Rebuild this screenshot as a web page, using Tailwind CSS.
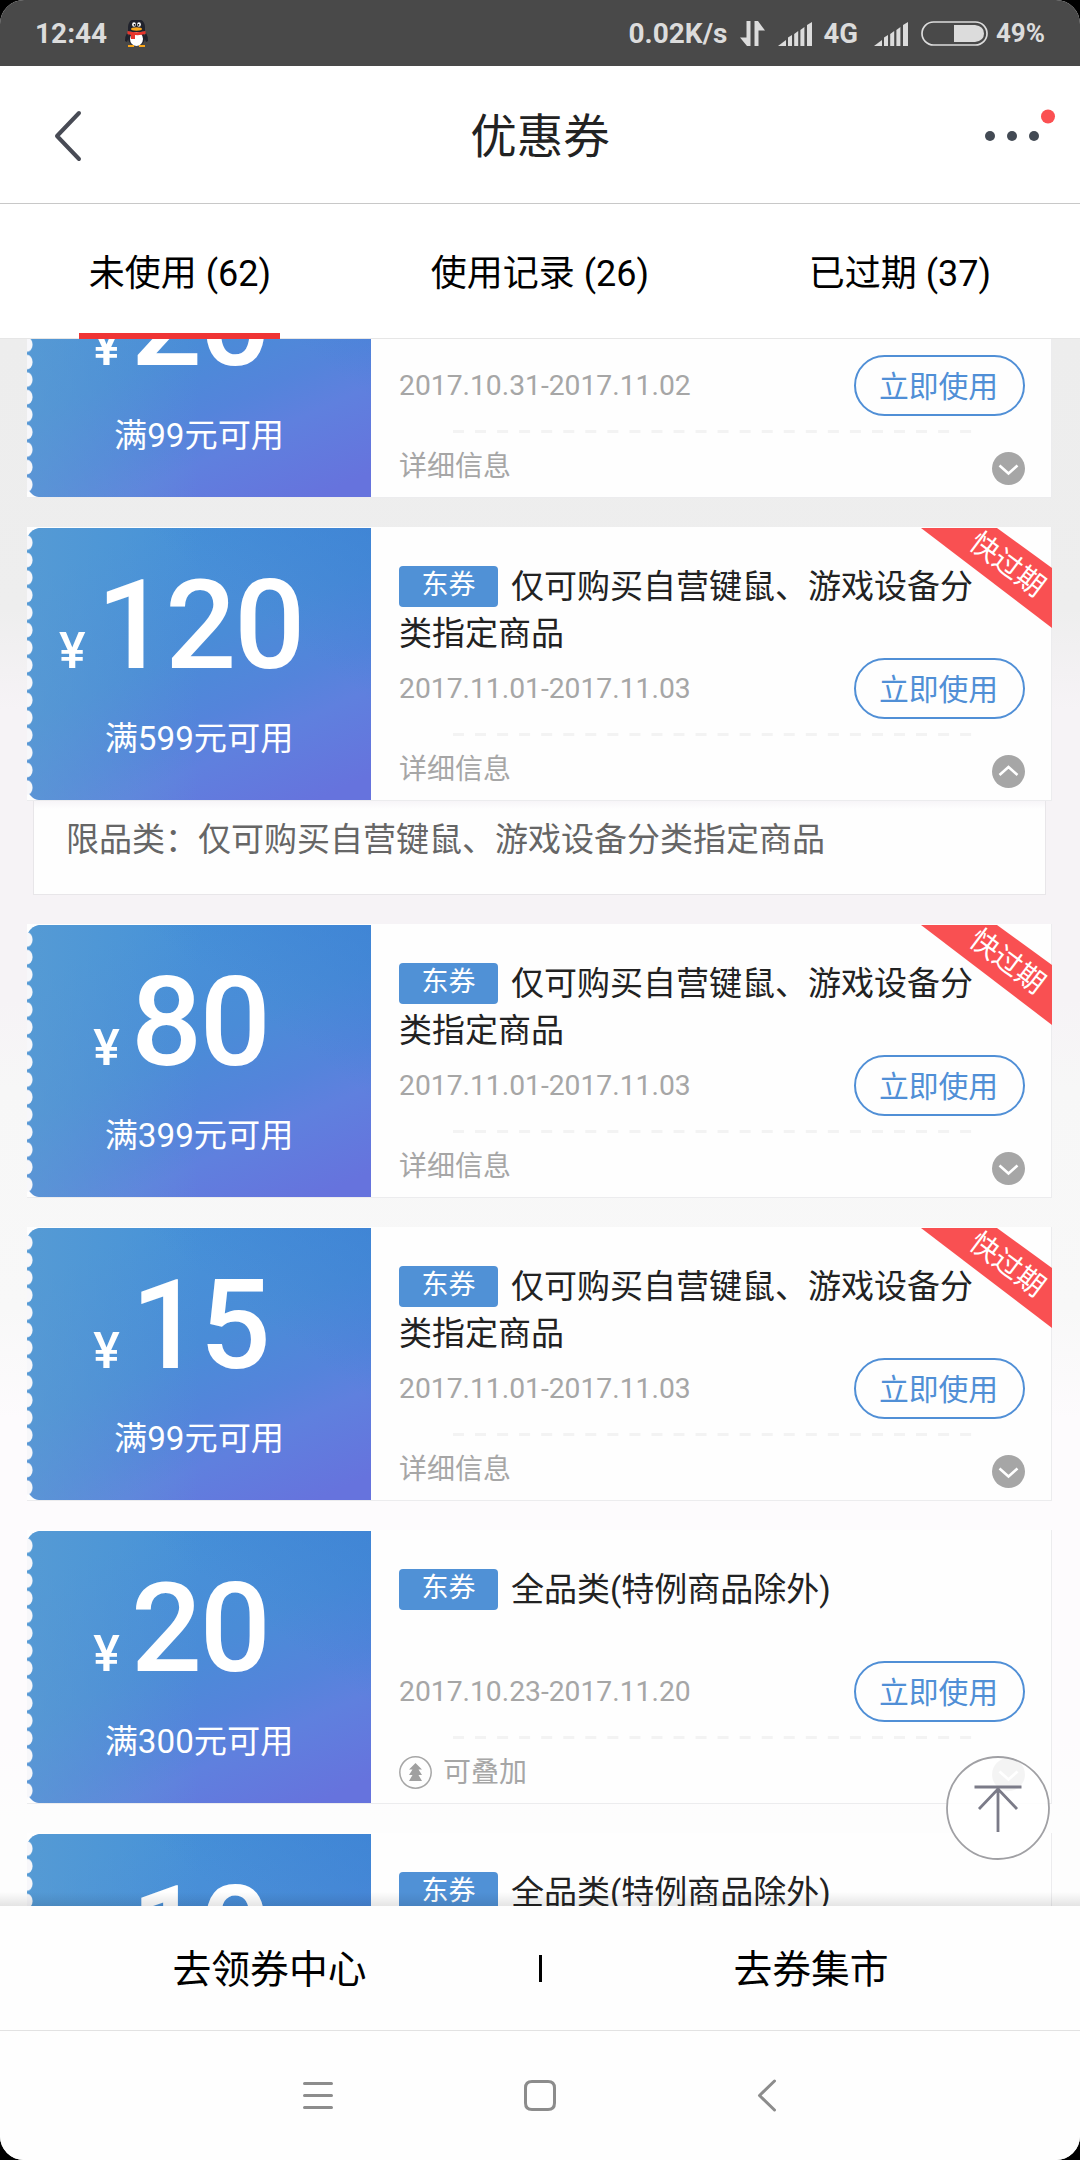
<!DOCTYPE html>
<html lang="zh-CN">
<head>
<meta charset="utf-8">
<title>优惠券</title>
<script src="https://cdn.jsdelivr.net/npm/@tailwindcss/browser@4"></script>
</head>
<body class="bg-black">
<svg class="absolute w-0 h-0">
  <symbol id="signal" viewBox="0 0 34 24"><g fill="#dcdcdc"><path d="M0 24 8 18V24Z"/><path d="M10 15.500 14 13V24H10ZM16.200 12 20.200 9V24H16.200ZM22.400 8 26.400 5V24H22.400ZM29 3 34 0V24H29Z"/></g></symbol>
  <symbol id="down" viewBox="0 0 33 33"><circle cx="16.500" cy="16.500" r="16.500" fill="#a6a6a6"/><path d="M7.500 13.500 16.500 21.500 25.500 13.500" fill="none" stroke="#fff" stroke-width="2.600"/></symbol>
  <symbol id="up" viewBox="0 0 33 33"><circle cx="16.500" cy="16.500" r="16.500" fill="#a6a6a6"/><path d="M7.500 20 16.500 12 25.500 20" fill="none" stroke="#fff" stroke-width="2.600"/></symbol>
  <defs>
    <linearGradient id="tg" gradientUnits="userSpaceOnUse" x1="120" y1="0" x2="250" y2="290"><stop offset="0" stop-color="#4692d8"/><stop offset=".4" stop-color="#4a8cd7"/><stop offset=".62" stop-color="#5484db"/><stop offset=".75" stop-color="#5f80de"/><stop offset="1" stop-color="#6673dd"/></linearGradient>
    <linearGradient id="tl" x1="0" x2="1" y1="0" y2="0"><stop offset="0" stop-color="#5fa0d2" stop-opacity=".6"/><stop offset=".5" stop-color="#5fa0d2" stop-opacity="0"/></linearGradient>
    <linearGradient id="tr" gradientUnits="userSpaceOnUse" x1="344" y1="0" x2="260" y2="110"><stop offset="0" stop-color="#3a80d4" stop-opacity=".6"/><stop offset="1" stop-color="#3a80d4" stop-opacity="0"/></linearGradient>
    <pattern id="teeth" patternUnits="userSpaceOnUse" x="0" y="5.800" width="8" height="17.500"><ellipse cx="0" cy="8.750" rx="5.600" ry="7.200" fill="#f7f7fa"/></pattern>
  </defs>
  <symbol id="ticket" viewBox="0 0 344 272">
    <path d="M12 0H344V272H12Q5 271 1 264L0 262V10L1 8Q5 1 12 0Z" fill="url(#tg)"/>
    <path d="M12 0H344V272H12Q5 271 1 264L0 262V10L1 8Q5 1 12 0Z" fill="url(#tl)"/>
    <path d="M12 0H344V272H12Q5 271 1 264L0 262V10L1 8Q5 1 12 0Z" fill="url(#tr)"/>
    <rect x="0" y="6" width="8" height="262" fill="url(#teeth)"/>
  </symbol>
</svg>
<div class="w-[1080px] h-[2160px] rounded-[24px] overflow-hidden bg-white flex flex-col font-[Roboto,'Noto_Sans_CJK_SC',sans-serif] relative">
  <header class="h-[66px] shrink-0 bg-[#494949] flex items-center text-[#dcdcdc] text-[28px] font-bold pl-[35px] pr-[35px] pt-[2px]">
    <span class="w-[90px]">12:44</span>
    <svg class="w-[23px] h-[28px]" viewBox="0 1 23 28"><path d="M2 14Q0 17 0 22L2 23 4 18M21 14Q23 17 23 22L21 23 19 18" fill="#20222c"/><ellipse cx="11.500" cy="19" rx="8.500" ry="8" fill="#20222c"/><ellipse cx="11.500" cy="20" rx="6.500" ry="7" fill="#fff"/><path d="M3 12V8Q3.500 0 11.500 0T20 8V12H3Z" fill="#20222c"/><ellipse cx="9" cy="5.500" rx="1.900" ry="2.300" fill="#fff"/><ellipse cx="14" cy="5.500" rx="1.900" ry="2.300" fill="#fff"/><circle cx="9.500" cy="5.800" r=".9"/><circle cx="13.500" cy="5.800" r=".9"/><ellipse cx="11.500" cy="10" rx="5.500" ry="1.700" fill="#f9a61a"/><path d="M2.500 12Q11.500 14.500 20.500 12V15Q15 16.500 10 16V20H6V16L2.500 15Z" fill="#e8352c"/><path d="M3 26H9V28H3ZM14 26H20V28H14Z" fill="#f9a61a"/></svg>
    <div class="ml-auto flex items-center">
      <span>0.02K/s</span>
      <svg class="w-[25px] h-[25px] ml-[13px] -mt-px" viewBox="0 0 25 25" fill="#dcdcdc"><path d="M6.500 0H10.500V25H7L0 16.500H6.500ZM14.500 25V0H18L25 9.500H18.500V25Z"/></svg>
      <svg class="w-[34px] h-[24px] ml-[13px]"><use href="#signal"/></svg>
      <span class="ml-[11px] text-[27.500px]">4G</span>
      <svg class="w-[34px] h-[24px] ml-[16px]"><use href="#signal"/></svg>
      <svg class="w-[67px] h-[25px] ml-[13px] -mt-[2px]" viewBox="0 0 67 25"><rect x="1" y="1" width="65" height="23" rx="11.500" fill="none" stroke="#dcdcdc" stroke-width="1.700"/><path d="M33 4H54Q63 5 63 12.500T54 21H33Z" fill="#dcdcdc"/></svg>
      <span class="ml-[8px] text-[26px] -mt-px">49%</span>
    </div>
  </header>
  <div class="h-[138px] shrink-0 border-b border-[#c8c8c8] grid grid-cols-3 items-center">
    <svg class="w-[28px] h-[52px] ml-[54px] mt-[2px]" viewBox="0 0 28 52"><path d="M25 3 3 26 25 49" fill="none" stroke="#484b55" stroke-width="4" stroke-linecap="round" stroke-linejoin="round"/></svg>
    <h1 class="text-center text-[46.500px] leading-none text-[#222] pt-[5px]">优惠券</h1>
    <svg class="w-[74px] h-[60px] justify-self-end mr-[23px]" viewBox="0 0 74 60"><g fill="#434a54"><circle cx="7" cy="31" r="5"/><circle cx="29" cy="31" r="5"/><circle cx="51" cy="31" r="5"/></g><circle cx="65" cy="11.500" r="7" fill="#fb5052"/></svg>
  </div>
  <nav class="h-[135px] shrink-0 border-b border-[#e6e6e6] grid grid-cols-3 text-center text-[36px] leading-[141px] text-black relative">
    <span>未使用 (62)</span><span>使用记录 (26)</span><span>已过期 (37)</span>
    <i class="absolute z-10 left-[79px] top-[129px] w-[201px] h-[6px] bg-[#ef3434]"></i>
  </nav>
  <main id="list" class="h-[1567px] shrink-0 overflow-hidden relative bg-[linear-gradient(#ededed_0,#eeeeee_270px,#f6f3f6_370px,#f6f3f6_660px,#f7f7f7_750px,#f8f8f8_970px,#fdfbfd_1080px,#fdfbfd_1400px,#fdfdfd_1480px)]">
  </main>
  <footer class="h-[125px] shrink-0 bg-[#fefefe] border-b border-[#e2e2e2] flex items-center text-[38.800px] text-black">
    <span class="w-[539px] pt-[5px] text-center">去领券中心</span><i class="w-[3px] h-[27px] bg-black"></i><span class="w-[538px] pt-[5px] text-center">去券集市</span>
  </footer>
  <div class="grow bg-[#fefefe] flex items-center pl-[303px]">
    <svg class="w-[474px] h-[34px]" viewBox="0 0 474 34" fill="none" stroke="#8c8c8c" stroke-width="3" stroke-linecap="round" stroke-linejoin="round"><path d="M1.500 4.500H28.500M1.500 16.500H28.500M1.500 28.500H28.500"/><path d="M229 2.500H245Q251.500 2.500 251.500 9V24Q251.500 30.500 245 30.500H229Q222.500 30.500 222.500 24V9Q222.500 2.500 229 2.500Z"/><path d="M471.500 2 456.500 16.500 471.500 31"/></svg>
  </div>
  <svg class="absolute left-[945px] top-[1755px] w-[106px] h-[106px]" viewBox="0 0 106 106"><circle cx="53" cy="53" r="51" fill="#fff" fill-opacity=".88" stroke="#a0a0a4" stroke-width="1.800"/><path d="M29.500 32H76.500M53 33V77M34 54 53 34 72 54" fill="none" stroke="#7b7b88" stroke-width="2.800"/></svg>
</div>
<script>
const LONG = '仅可购买自营键鼠、游戏设备分类指定商品';
const ALL = '全品类(特例商品除外)';
const coupons = [
  {price: 20, min: 99, title: ALL, date: '2017.10.31-2017.11.02'},
  {price: 120, min: 599, title: LONG, date: '2017.11.01-2017.11.03', soon: true, open: true},
  {price: 80, min: 399, title: LONG, date: '2017.11.01-2017.11.03', soon: true},
  {price: 15, min: 99, title: LONG, date: '2017.11.01-2017.11.03', soon: true},
  {price: 20, min: 300, title: ALL, date: '2017.10.23-2017.11.20', stack: true},
  {price: 10, min: 200, title: ALL, date: '2017.10.23-2017.11.20', stack: true},
];
const ribbon = `<div class="absolute -right-px top-px w-[131px] h-[100px] overflow-hidden">
  <svg class="absolute inset-0" width="131" height="100"><path d="M0 0H76L131 40V100Z" fill="#f95052"/></svg>
  <span class="absolute left-[41px] top-[19px] w-[90px] h-[36px] leading-[36px] text-center text-[28.500px] text-white rotate-[37deg]">快过期</span></div>`;
const stackIcon = `<svg class="w-[33px] h-[33px] mr-[11px] -mt-[5px]" viewBox="0 0 33 33"><circle cx="16.500" cy="16.500" r="15.700" fill="none" stroke="#a6a6a6" stroke-width="1.500"/><path d="M16.500 7 23 13.500H19.500L23 19H19.500L23 25H10L13.500 19H10L13.500 13.500H10Z" fill="#a0a0a0"/></svg>`;
document.getElementById('list').innerHTML = '<div class="-mt-[115px] flex flex-col gap-[29px] pl-[27px] pr-[28px]">' + coupons.map(c => `
<section>
  <div class="relative h-[274px] flex bg-[#fefefe] border-b border-r border-[#ececee]">
    <div class="relative w-[344px] h-[272px] mt-px shrink-0">
      <svg class="absolute inset-0 w-[344px] h-[272px]"><use href="#ticket"/></svg>
      <div class="relative flex flex-col text-white items-center">
        <div class="h-[181px] pt-[35px] pr-[36px] flex items-baseline font-medium leading-[126px]"><span class="text-[50px] mr-[11px]">¥</span><span class="text-[125px] tracking-[-2.200px]">${c.price}</span></div>
        <div class="text-[33.200px] leading-[60px]">满${c.min}元可用</div>
      </div>
    </div>
    <div class="grow pl-[28px] pr-[26px] pt-[36px]">
      <div class="h-[95px] w-[585px] text-[33px] leading-[47px] text-[#222]"><span class="inline-block align-top mt-[3px] mr-[13px] w-[99px] h-[41px] rounded-[4px] bg-[#5091d6] text-white text-[27px] leading-[39px] text-center">东券</span>${c.title}</div>
      <div class="flex items-center justify-between h-[61px] text-[28.250px] text-[#a6a6a6]"><span class="pt-[2px]">${c.date}</span><span class="w-[171px] h-[61px] rounded-full border-2 border-[#508fd6] text-[#508fd6] text-[29.800px] leading-[60px] text-center pr-[2px]">立即使用</span></div>
      <svg class="mt-[14px] ml-[54px] block" width="520" height="3"><path d="M0 1.500H520" stroke="#f3f3f3" stroke-width="3" stroke-dasharray="11 11.050"/></svg>
      <div class="flex items-center mt-[15px] h-[41px] text-[28px] text-[#a6a6a6]">${c.stack ? stackIcon : ''}<span class="pb-[3px]">${c.stack ? '可叠加' : '详细信息'}</span><svg class="w-[33px] h-[33px] ml-auto"><use href="#${c.open ? 'up' : 'down'}"/></svg></div>
    </div>
    ${c.soon ? ribbon : ''}
  </div>
  ${c.open ? `<div class="mx-[6px] h-[94px] bg-[linear-gradient(#f7f5f8,#fefefe_8px)] border-x border-b border-[#e8e6e9] pl-[32px] pt-[8px] text-[33px] leading-[61px] text-[#666]">限品类：${LONG}</div>` : ''}
</section>`).join('') + '</div><div class="absolute inset-x-0 bottom-0 h-[14px] bg-linear-to-b from-transparent to-black/10"></div>';
</script>
</body>
</html>
